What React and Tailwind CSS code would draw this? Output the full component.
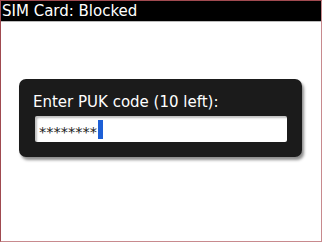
export default function App() {
  return (
    <div className="w-[322px] h-[242px] bg-white border border-[#a04a50] border-r-[#c88a8e] border-b-[#c88a8e] flex flex-col overflow-hidden font-['DejaVu_Sans',sans-serif]">
      {/* title bar */}
      <div className="h-[21px] bg-black text-white text-[15px] leading-[21px] pl-[1px] border-b border-[#bbbbbb]">
        SIM Card: Blocked
      </div>

      <div className="flex-1 pl-[18px] pt-[57px]">
        <div className="w-[283px] h-[78px] bg-[#1b1b1b] rounded-[7px] shadow-[2px_3px_3px_rgba(0,0,0,0.45)] pl-[14px] pt-[13px]">
          <div className="text-white text-[15px] leading-[20px]">Enter PUK code (10 left):</div>
          <div className="mt-[4px] ml-[2px] w-[252px] h-[26px] bg-white rounded-[2px] shadow-[inset_2px_2px_2px_rgba(0,0,0,0.25)] flex items-center pl-[4px]">
            <span className="text-[#222] text-[14.5px] leading-none translate-y-[3px]">********</span>
            <span className="w-[5px] h-[19px] bg-[#1d5fd6] ml-[1px]" />
          </div>
        </div>
      </div>
    </div>
  )
}
